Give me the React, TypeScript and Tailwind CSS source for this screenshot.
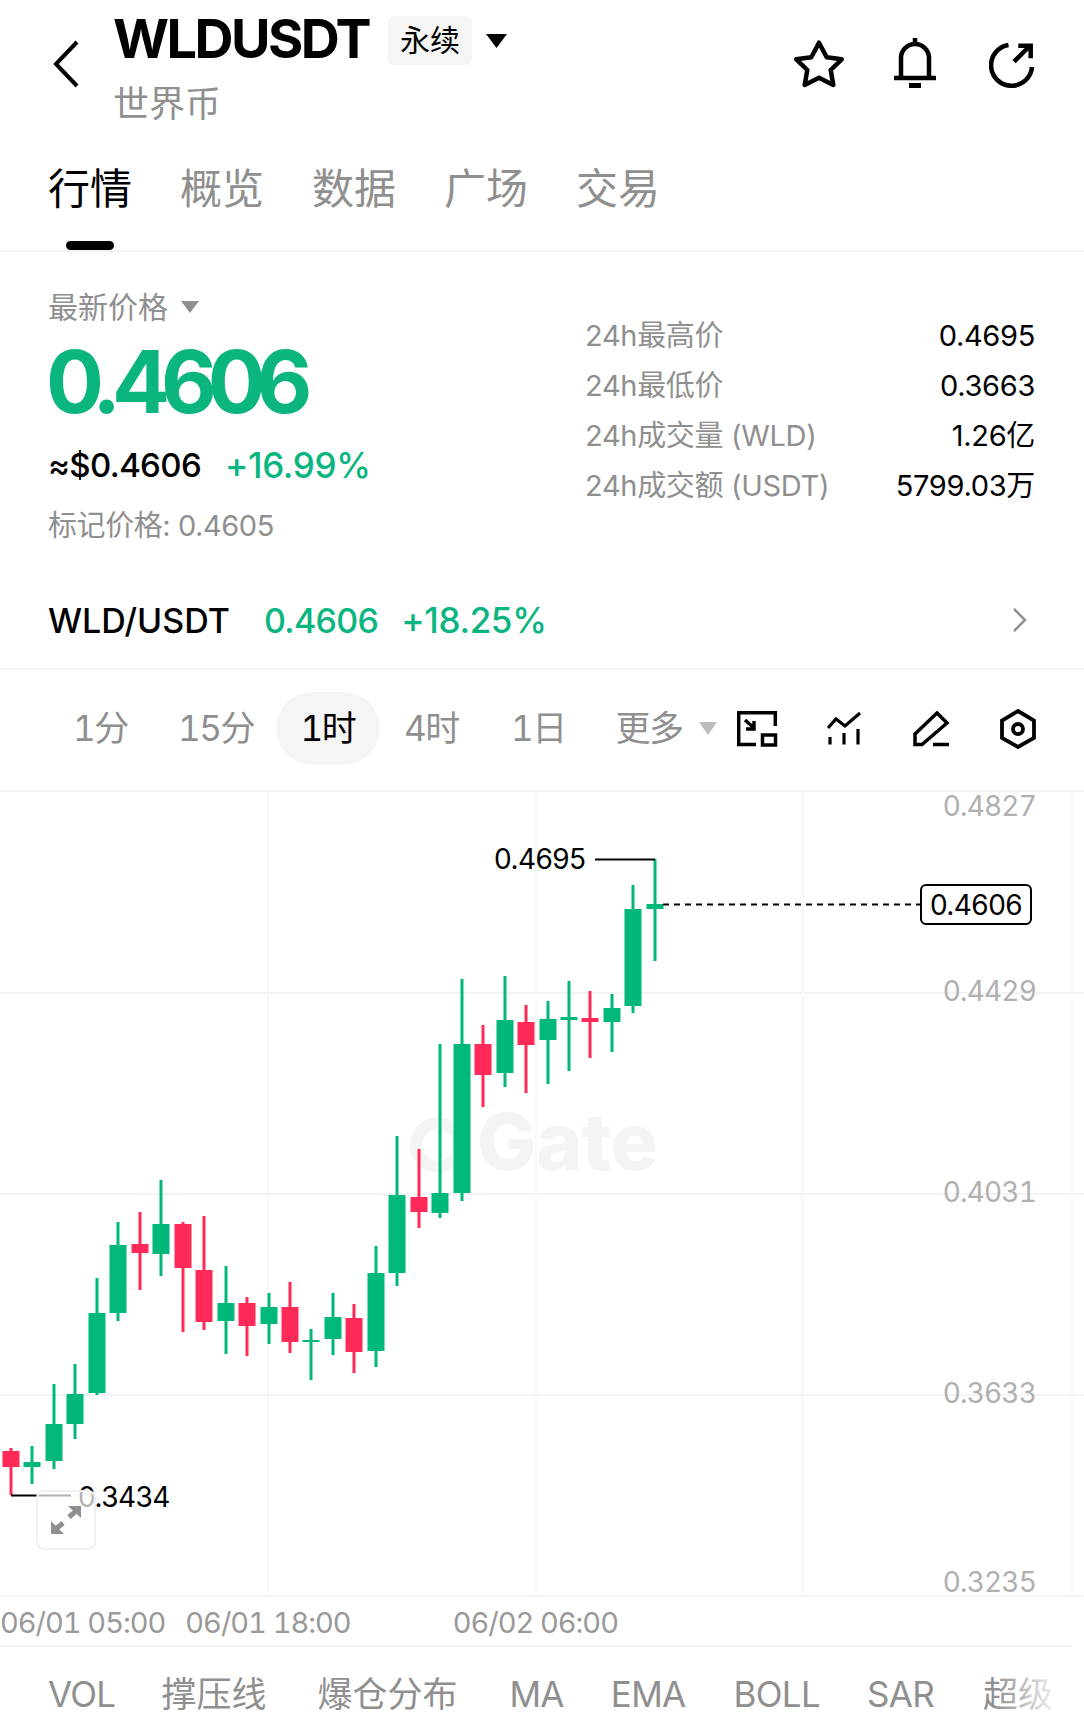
import React from "react";

type Candle = [number, number, number, number, number, "g" | "r"];

// x, wick top, wick bottom, body top, body bottom (page pixels)
const candles: Candle[] = [
  [11, 1448, 1495, 1451, 1467, "r"],
  [32, 1446, 1484, 1462, 1467, "g"],
  [54, 1384, 1469, 1424, 1461, "g"],
  [75, 1364, 1439, 1394, 1424, "g"],
  [97, 1278, 1395, 1313, 1393, "g"],
  [118, 1222, 1321, 1245, 1313, "g"],
  [140, 1212, 1290, 1244, 1253, "r"],
  [161, 1180, 1276, 1224, 1254, "g"],
  [183, 1222, 1332, 1224, 1268, "r"],
  [204, 1216, 1330, 1270, 1322, "r"],
  [226, 1266, 1354, 1303, 1321, "g"],
  [247, 1297, 1356, 1303, 1326, "r"],
  [269, 1293, 1344, 1307, 1324, "g"],
  [290, 1282, 1353, 1307, 1342, "r"],
  [311, 1329, 1380, 1340, 1342, "g"],
  [333, 1293, 1355, 1317, 1339, "g"],
  [354, 1304, 1373, 1318, 1352, "r"],
  [376, 1246, 1367, 1273, 1351, "g"],
  [397, 1136, 1286, 1195, 1273, "g"],
  [419, 1149, 1228, 1197, 1212, "r"],
  [440, 1044, 1218, 1193, 1213, "g"],
  [462, 979, 1201, 1044, 1193, "g"],
  [483, 1025, 1107, 1044, 1075, "r"],
  [505, 976, 1087, 1020, 1073, "g"],
  [526, 1005, 1093, 1022, 1045, "r"],
  [548, 1001, 1084, 1019, 1040, "g"],
  [569, 981, 1071, 1017, 1020, "g"],
  [590, 991, 1058, 1018, 1022, "r"],
  [612, 994, 1052, 1008, 1022, "g"],
  [633, 885, 1013, 909, 1006, "g"],
  [655, 859, 961, 904, 909, "g"],
];

const stats = [
  ["24h最高价", "0.4695"],
  ["24h最低价", "0.3663"],
  ["24h成交量 (WLD)", "1.26亿"],
  ["24h成交额 (USDT)", "5799.03万"],
];

const tabs = ["概览", "数据", "广场", "交易"];

const Chart = () => (
  <svg viewBox="0 792 1084 803" className="block h-[803px] w-[1084px]">
    {[993, 1194, 1395].map((y) => (
      <line key={y} x1="0" x2="1084" y1={y} y2={y} stroke="#f3f3f3" strokeWidth="2" />
    ))}
    {[268, 536, 803, 1072].map((x) => (
      <line key={x} x1={x} x2={x} y1="792" y2="1595" stroke="#f8f8f8" strokeWidth="2" />
    ))}
    {/* watermark */}
    <circle cx="438" cy="1145" r="22" fill="none" stroke="#f3f4f4" strokeWidth="12" />
    <text x="477" y="1170" fontFamily="Inter, sans-serif" fontWeight="800" fontSize="79" fill="#f3f4f4">
      Gate
    </text>
    {candles.map(([x, wt, wb, bt, bb, c]) => {
      const color = c === "g" ? "#00b87a" : "#ff2a57";
      return (
        <g key={x}>
          <rect x={x - 1.5} y={wt} width="3" height={wb - wt} fill={color} />
          <rect x={x - 8.5} y={bt} width="17" height={bb - bt} fill={color} />
        </g>
      );
    })}
    {/* high / low leaders and last price */}
    <path d="M595 859.5H655" stroke="#000" strokeWidth="2" />
    <path d="M11 1495.5H71" stroke="#000" strokeWidth="2" />
    <path d="M663 904.5H922" stroke="#000" strokeWidth="2" strokeDasharray="6 5" />
  </svg>
);

export default function App() {
  return (
    <div className="h-[1718px] w-[1084px] overflow-hidden bg-white font-['Inter','Noto_Sans_CJK_SC',sans-serif] text-black">
      {/* Header */}
      <header className="flex h-[140px] items-start pl-[52px] pr-[49px]">
        <svg width="28" height="48" viewBox="0 0 28 48" className="mt-[40px]" fill="none" stroke="#000" strokeWidth="4">
          <path d="M25 2 4 24l21 22" />
        </svg>
        <div className="ml-[33px]">
          <div className="mt-[13px] flex h-[52px] items-center">
            <span className="text-[54px] font-bold leading-none tracking-[-0.047em]">WLDUSDT</span>
            <span className="ml-[19px] mt-[3px] flex h-[49px] w-[84px] items-center justify-center rounded-md bg-[#f5f5f5] text-[30px]">
              永续
            </span>
            <svg width="21" height="14" viewBox="0 0 21 14" className="ml-[14px] mt-[3px]">
              <path d="M0 0h21L10.5 14z" fill="#000" />
            </svg>
          </div>
          <div className="mt-[16px] text-[36px] leading-[46px] text-[#8f8f8f]">世界币</div>
        </div>
        <div className="ml-auto mt-[38px] flex items-start">
          <svg width="50" height="48" viewBox="0 0 50 48" className="mt-[2px]" fill="none" stroke="#000" strokeWidth="4.500" strokeLinejoin="round">
            <path d="M25 2.700l7.700 14.600 15 2-11 10.700 2.600 15L25 37.700 10.700 45l2.600-15-11-10.700 15-2z" />
          </svg>
          <svg width="44" height="50" viewBox="0 0 44 50" className="ml-[50px]" fill="none" stroke="#000" strokeWidth="4.500">
            <path d="M21 0v6M7 40V20a14 14 0 0 1 28 0v20M0 40h42" />
            <path d="M15 47.500h12" strokeWidth="5" />
          </svg>
          <svg width="46" height="46" viewBox="0 0 46 46" className="ml-[51px] mt-[5px]" fill="none" stroke="#000" strokeWidth="4.500">
            <path d="M19.500 2A20.500 20.500 0 1 0 43 24" />
            <path d="M25 18.700 40.700 3M29.300 2.700h12.400v12.600" />
          </svg>
        </div>
      </header>

      {/* Tabs */}
      <nav className="relative flex h-[112px] items-start border-b-2 border-[#f3f3f3] pl-[48px] pt-[24px] text-[42px] leading-[50px]">
        <span>行情</span>
        {tabs.map((t) => (
          <span key={t} className="ml-[48px] text-[#8f8f8f]">
            {t}
          </span>
        ))}
        <span className="absolute left-[66px] top-[101px] h-[9px] w-[48px] rounded-full bg-black" />
      </nav>

      {/* Price block */}
      <section className="flex h-[418px] items-start justify-between border-b-2 border-[#f3f3f3] pl-[48px] pr-[49px]">
        <div>
          <div className="mt-[35px] flex items-center text-[30px] leading-[40px] text-[#8f8f8f]">
            最新价格
            <svg width="18" height="12" viewBox="0 0 18 12" className="ml-[13px]">
              <path d="M0 0h18L9 12z" fill="#8f8f8f" />
            </svg>
          </div>
          <div className="-ml-[2px] mt-[5px] text-[86px] font-bold leading-[100px] tracking-[-0.106em] text-[#0bb57f]">0.4606</div>
          <div className="mt-[11px] flex items-center text-[33px] leading-[44px]">
            <span className="font-medium tracking-[-0.02em]">≈$0.4606</span>
            <span className="ml-[24px] text-[35px] font-medium tracking-[-0.01em] text-[#0bb57f]">+16.99%</span>
          </div>
          <div className="mt-[17px] text-[29px] leading-[44px] tracking-[-0.015em] text-[#8f8f8f]">标记价格: 0.4605</div>
        </div>
        <div className="mt-[59px] flex w-[450px] flex-col">
          {stats.map(([label, value]) => (
            <div key={label} className="flex h-[50px] items-center justify-between tracking-[-0.02em]">
              <span className="text-[29px] text-[#8f8f8f]">{label}</span>
              <span className="text-[29px]">{value}</span>
            </div>
          ))}
        </div>
      </section>

      {/* Spot row is pulled over the bottom of the price block */}
      <div className="-mt-[75px] mb-[25px] flex h-[50px] items-center pl-[48px] pr-[56px] text-[34px] font-medium">
        <span>WLD/USDT</span>
        <span className="ml-[34px] tracking-[-0.02em] text-[#0bb57f]">0.4606</span>
        <span className="ml-[23px] text-[35px] tracking-[-0.01em] text-[#0bb57f]">+18.25%</span>
        <svg width="16" height="24" viewBox="0 0 16 24" className="ml-auto" fill="none" stroke="#8f8f8f" strokeWidth="2.500">
          <path d="M2 1l11 11L2 23" />
        </svg>
      </div>

      {/* Timeframes */}
      <div className="flex h-[122px] items-center whitespace-nowrap border-b-2 border-[#f3f3f3] pb-[3px] pl-[73px] pr-[48px] text-[35px] tabular-nums tracking-[-0.04em] text-[#8f8f8f]">
        <span className="w-[54px] shrink-0 text-center">1分</span>
        <span className="ml-[51px] w-[73px] shrink-0 text-center">15分</span>
        <span className="ml-[25px] flex h-[73px] w-[104px] shrink-0 items-center justify-center rounded-full bg-[#f5f5f5] text-black">
          1时
        </span>
        <span className="ml-[24px] w-[55px] shrink-0 text-center">4时</span>
        <span className="ml-[52px] w-[51px] shrink-0 text-center">1日</span>
        <span className="ml-[52px] w-[70px] shrink-0 text-center">更多</span>
        <svg width="18" height="13" viewBox="0 0 18 13" className="ml-[15px] shrink-0">
          <path d="M0 0h18L9 13z" fill="#bdbdbd" />
        </svg>
        <div className="ml-auto flex items-center">
          <svg width="41" height="36" viewBox="0 0 41 36" fill="none" stroke="#000" strokeWidth="3.500">
            <path d="M19 33.500H1.700V1.700h36.600V15M8 9l9 8M17 10v8H9" />
            <rect x="25.500" y="24" width="13" height="10" />
          </svg>
          <svg width="36" height="36" viewBox="0 0 36 36" className="ml-[49px]" fill="none" stroke="#000" strokeWidth="3.200">
            <path d="M1 17l8-9 9 7L33 2M3 26v7.500M17 22v11.500M31 18v15.500" />
          </svg>
          <svg width="38" height="36" viewBox="0 0 38 36" className="ml-[50px]" fill="none" stroke="#000" strokeWidth="3.500">
            <path d="M24 2l10 10L9 33.500H2V23zM20 33.500h16" />
          </svg>
          <svg width="36" height="40" viewBox="0 0 36 40" className="ml-[49px]" fill="none" stroke="#000" strokeWidth="3.800">
            <path d="M18 2 34 11.500V29L18 38 2 29V11.500z" />
            <circle cx="18" cy="20" r="5" />
          </svg>
        </div>
      </div>

      {/* Candlestick chart */}
      <div className="relative h-[805px] border-b-2 border-[#f3f3f3] text-[28px] leading-[34px] tracking-[-0.02em]">
        <Chart />
        <span className="absolute right-[48px] top-[-3px] tabular-nums tracking-[-0.03em] text-[#b0b0b0]">0.4827</span>
        <span className="absolute right-[48px] top-[182px] tabular-nums tracking-[-0.03em] text-[#b0b0b0]">0.4429</span>
        <span className="absolute right-[48px] top-[383px] tabular-nums tracking-[-0.03em] text-[#b0b0b0]">0.4031</span>
        <span className="absolute right-[48px] top-[584px] tabular-nums tracking-[-0.03em] text-[#b0b0b0]">0.3633</span>
        <span className="absolute right-[48px] top-[773px] tabular-nums tracking-[-0.03em] text-[#b0b0b0]">0.3235</span>
        <span className="absolute left-[494px] top-[50px]">0.4695</span>
        <span className="absolute left-[78px] top-[688px]">0.3434</span>
        <span className="absolute left-[920px] top-[92px] flex h-[41px] w-[112px] items-center justify-center rounded-md border-2 border-black bg-white">
          0.4606
        </span>
        <div className="absolute left-[36px] top-[698px] flex h-[60px] w-[60px] items-center justify-center rounded-lg border-2 border-[#f0f0f0] bg-white/70">
          <svg width="30" height="28" viewBox="0 0 30 28" fill="none" stroke="#8f8f8f" strokeWidth="5">
            <path d="M6 22l6-5M18 11l6-5" />
            <path d="M17 0h13v12zM0 15v13h13z" fill="#8f8f8f" stroke="none" />
          </svg>
        </div>
      </div>

      {/* Time axis */}
      <div className="flex h-[50px] w-[1072px] items-center border-b-2 border-[#f3f3f3] pt-[3px] text-[29px] tabular-nums tracking-[-0.035em] text-[#999999]">
        <span>06/01 05:00</span>
        <span className="ml-[20px]">06/01 18:00</span>
        <span className="ml-[102px]">06/02 06:00</span>
      </div>

      {/* Indicators */}
      <div className="relative flex h-[71px] items-center overflow-hidden whitespace-nowrap pl-[48px] pt-[24px] text-[35px] tracking-[-0.02em] text-[#8f8f8f]">
        <span>VOL</span>
        <span className="ml-[46px] tracking-normal">撑压线</span>
        <span className="ml-[51px] tracking-normal">爆仓分布</span>
        <span className="ml-[52px]">MA</span>
        <span className="ml-[47px]">EMA</span>
        <span className="ml-[48px]">BOLL</span>
        <span className="ml-[47px]">SAR</span>
        <span className="ml-[49px] tracking-normal">超级</span>
        <div className="absolute inset-y-0 right-[20px] w-[70px] bg-gradient-to-r from-white/0 to-white" />
        <div className="absolute inset-y-0 right-0 w-[20px] bg-white" />
      </div>
    </div>
  );
}
